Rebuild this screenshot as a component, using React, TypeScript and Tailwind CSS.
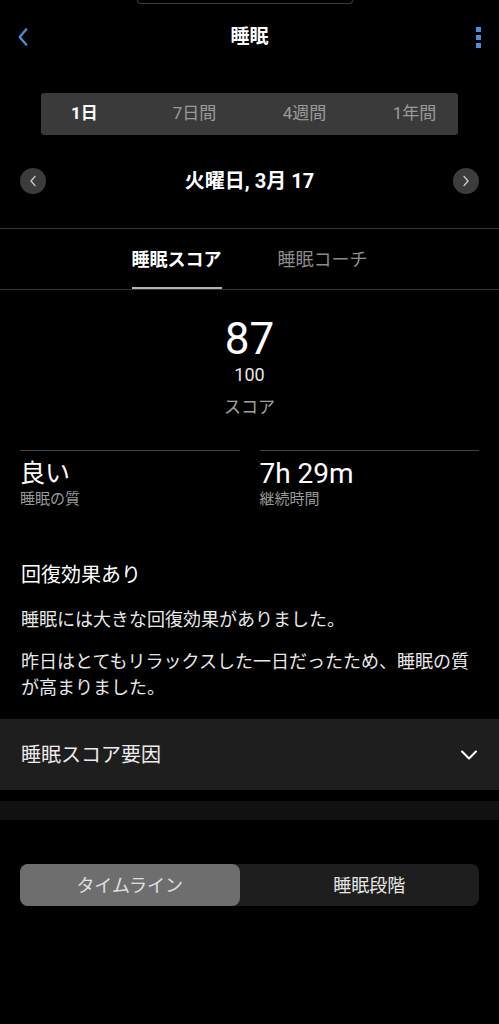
import { useState } from 'react';

const periods = ['1日', '7日間', '4週間', '1年間'];

function Chevron({ dir, className }: { dir: 'left' | 'right' | 'down'; className?: string }) {
  const d =
    dir === 'left' ? 'M9 2 L3 9 L9 16' : dir === 'right' ? 'M3 2 L9 9 L3 16' : 'M2 4 L10 12 L18 4';
  const box = dir === 'down' ? '0 0 20 16' : '0 0 12 18';
  return (
    <svg viewBox={box} className={className} fill="none" stroke="currentColor" strokeLinecap="round" strokeLinejoin="round">
      <path d={d} />
    </svg>
  );
}

export default function App() {
  const [period, setPeriod] = useState(0);
  const [tab, setTab] = useState(0);
  const [view, setView] = useState(0);

  return (
    <div
      className="min-h-[1024px] w-[499px] bg-black text-white overflow-hidden"
      style={{ fontFamily: 'Roboto, "Noto Sans CJK JP", sans-serif' }}
    >
      {/* camera cutout edge */}
      <div className="h-[4px] w-[216px] ml-[137px] rounded-b-[10px] border-x border-b border-[#3a3a3a]" />

      {/* header */}
      <div className="flex h-[66px] items-center justify-between px-[16px]">
        <button className="flex h-[30px] w-[20px] items-center">
          <Chevron dir="left" className="h-[20px] w-[14px] stroke-[2] text-[#4a8fe0]" />
        </button>
        <h1 className="text-[19px] font-bold">睡眠</h1>
        <div className="flex w-[20px] flex-col items-end gap-[3px] pr-[2px]">
          <span className="h-[5px] w-[5px] bg-[#4a8fe0]" />
          <span className="h-[5px] w-[5px] bg-[#4a8fe0]" />
          <span className="h-[5px] w-[5px] bg-[#4a8fe0]" />
        </div>
      </div>

      {/* period selector */}
      <div className="mx-[41px] mt-[23px] h-[42px] rounded-[3px] bg-[#3a3a3a]">
        <div className="grid h-full grid-cols-[110px_110px_110px_110px] justify-center">
          {periods.map((p, i) => (
            <button
              key={p}
              onClick={() => setPeriod(i)}
              className={`text-[17px] ${period === i ? 'font-bold text-white' : 'text-[#9a9a9a]'}`}
            >
              {p}
            </button>
          ))}
        </div>
      </div>

      {/* date row */}
      <div className="mt-[26px] flex h-[40px] items-center justify-between px-[20px]">
        <button className="flex h-[26px] w-[26px] items-center justify-center rounded-full bg-[#3c3c3c]">
          <Chevron dir="left" className="h-[12px] w-[8px] stroke-[2] text-[#d0d0d0]" />
        </button>
        <span className="text-[20px] font-bold">火曜日, 3月 17</span>
        <button className="flex h-[26px] w-[26px] items-center justify-center rounded-full bg-[#3c3c3c]">
          <Chevron dir="right" className="h-[12px] w-[8px] stroke-[2] text-[#d0d0d0]" />
        </button>
      </div>

      {/* tabs */}
      <div className="mt-[27px] flex justify-center gap-[56px] border-y border-[#333]">
        {['睡眠スコア', '睡眠コーチ'].map((t, i) => (
          <button
            key={t}
            onClick={() => setTab(i)}
            className={`h-[60px] border-b-2 pt-[2px] text-[18px] ${
              tab === i ? 'border-[#b4b4b4] font-bold text-white' : 'border-transparent text-[#8c8c8c]'
            }`}
          >
            {t}
          </button>
        ))}
      </div>

      {/* score */}
      <div className="flex flex-col items-center">
        <div className="mt-[27px] text-[44px] leading-[44px]">87</div>
        <div className="mt-[3px] text-[18px] leading-[22px] text-[#e6e6e6]">100</div>
        <div className="mt-[10px] text-[17px] leading-[22px] text-[#a0a0a0]">スコア</div>
      </div>

      <div className="mt-[32px] grid grid-cols-2 gap-[20px] px-[20px]">
        <div className="border-t border-[#444]">
          <div className="mt-[8px] text-[25px] leading-[30px]">良い</div>
          <div className="text-[15px] leading-[20px] text-[#9a9a9a]">睡眠の質</div>
        </div>
        <div className="border-t border-[#444]">
          <div className="mt-[8px] text-[28px] leading-[30px]">7h 29m</div>
          <div className="text-[15px] leading-[20px] text-[#9a9a9a]">継続時間</div>
        </div>
      </div>

      {/* summary */}
      <div className="px-[21px]">
        <h2 className="mt-[53px] text-[20px] leading-[26px]">回復効果あり</h2>
        <p className="mt-[19px] text-[18px] leading-[26px] text-[#e8e8e8]">睡眠には大きな回復効果がありました。</p>
        <p className="mt-[16px] text-[18px] leading-[26px] text-[#e8e8e8]">
          昨日はとてもリラックスした一日だったため、睡眠の質が高まりました。
        </p>
      </div>

      {/* factors */}
      <button className="mt-[18px] flex h-[71px] w-full items-center justify-between bg-[#1e1e1e] pl-[21px] pr-[19px]">
        <span className="text-[20px] text-[#ececec]">睡眠スコア要因</span>
        <Chevron dir="down" className="h-[14px] w-[22px] stroke-[2.4] text-white" />
      </button>
      <div className="mt-[11px] h-[19px] bg-[#111]" />

      {/* view toggle */}
      <div className="mx-[20px] mt-[44px] grid h-[42px] grid-cols-2 gap-[20px] rounded-[8px] bg-[#1e1e1e]">
        {['タイムライン', '睡眠段階'].map((v, i) => (
          <button
            key={v}
            onClick={() => setView(i)}
            className={`rounded-[8px] text-[18px] ${view === i ? 'bg-[#6e6e6e] text-[#e0e0e0]' : 'text-[#e6e6e6]'}`}
          >
            {v}
          </button>
        ))}
      </div>
    </div>
  );
}
